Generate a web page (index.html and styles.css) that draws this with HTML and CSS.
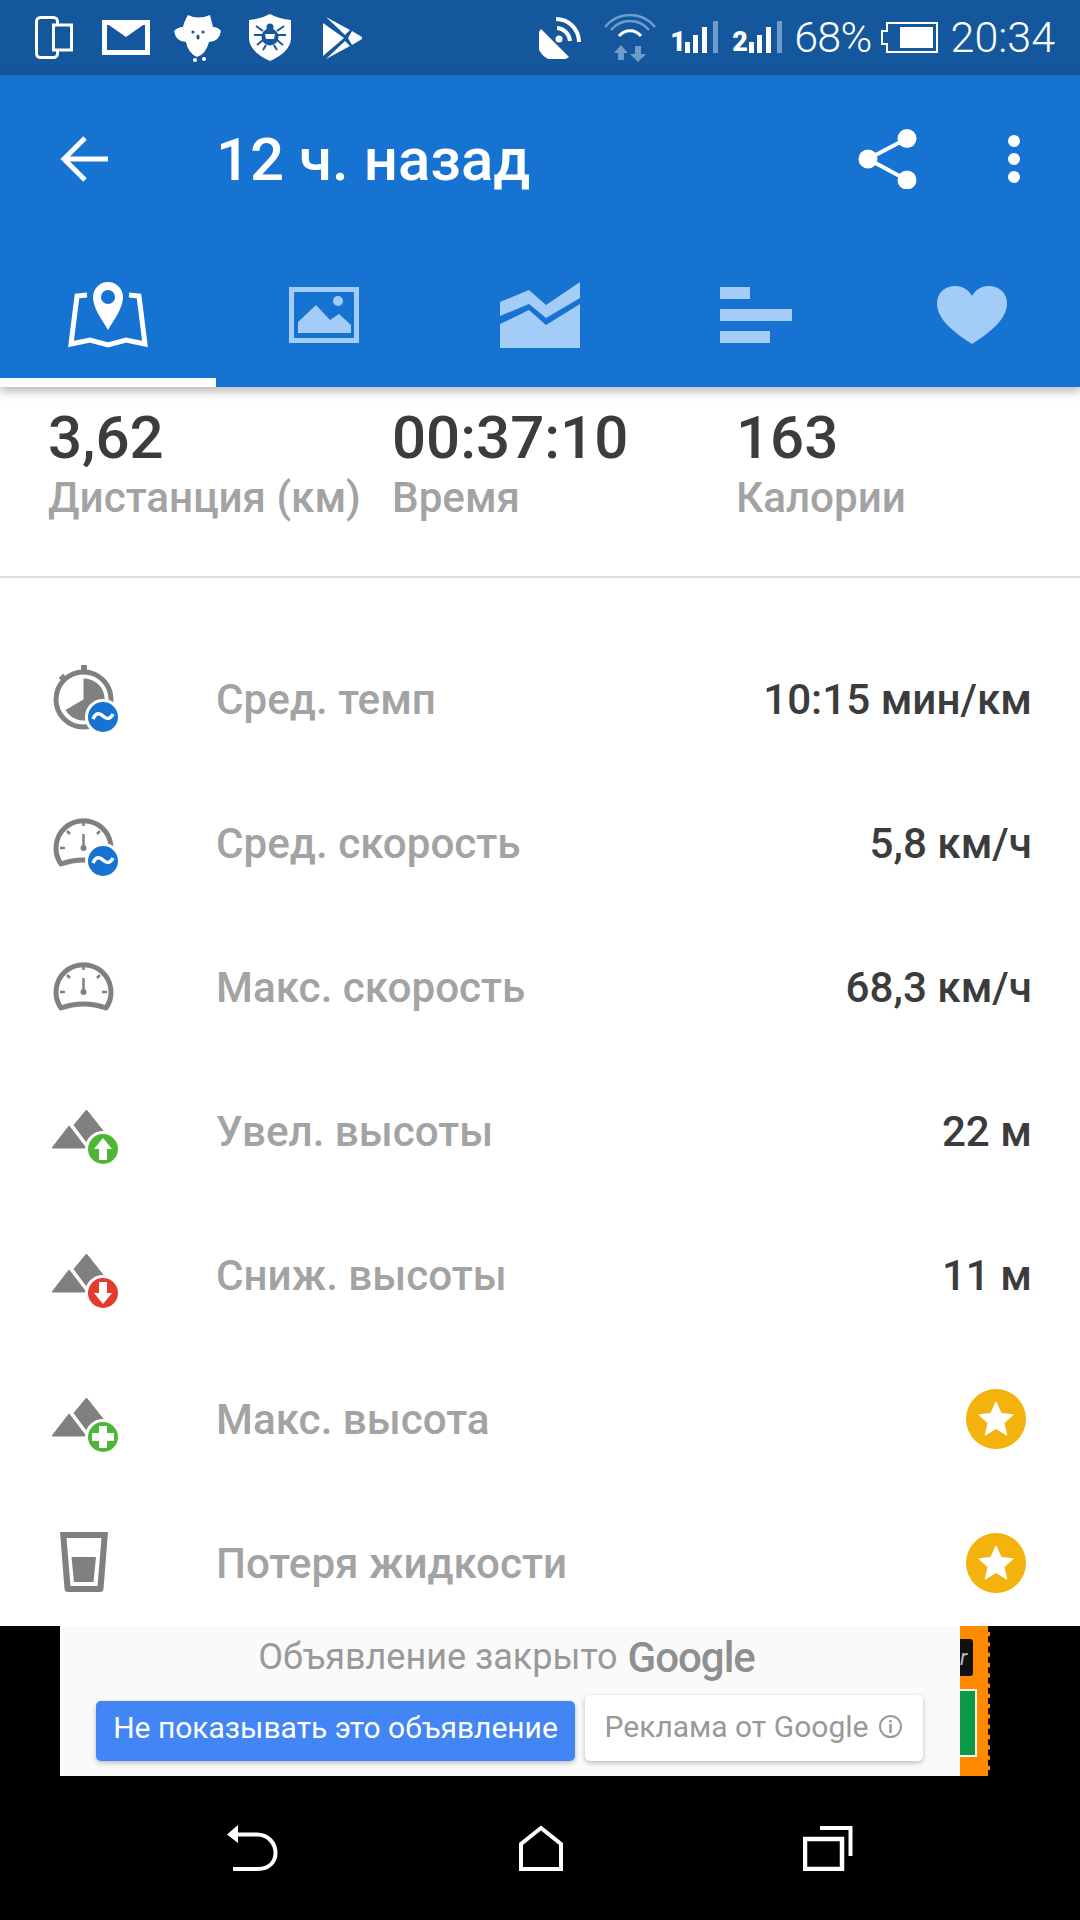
FILE: index.html
```html
<!DOCTYPE html>
<html lang="ru">
<head>
    <meta charset="UTF-8">
    <title>12 ч. назад</title>
    <link rel="stylesheet" href="styles.css">
</head>
<body>

<!-- Status bar -->
<div class="status-bar">
    <div class="status-left">
        <svg width="38" height="43" viewBox="0 0 38 43">
            <rect x="1.5" y="1.5" width="21" height="40" rx="4" fill="none" stroke="#fff" stroke-width="3"/>
            <rect x="18.5" y="9" width="18" height="25" fill="#14579c" stroke="#fff" stroke-width="3"/>
        </svg>
        <svg class="ic-mail" width="48" height="35" viewBox="0 0 48 35">
            <rect x="2.5" y="2.5" width="43" height="30" fill="none" stroke="#fff" stroke-width="5"/>
            <polygon points="4,3 44,3 24,17" fill="#fff"/>
        </svg>
        <svg class="ic-owl" width="47" height="48" viewBox="0 0 47 48">
            <path d="M14 1 Q24 6 36 1 Q38 9 39 13 Q44 13 47 17 Q45 28 35 28 Q32 40 23 43 Q14 39 12 28 Q2 28 0 17 Q4 13 9 13 Q10 8 14 1 Z" fill="#fff"/>
            <circle cx="19" cy="18" r="1.6" fill="#14579c"/>
            <circle cx="29" cy="18" r="1.6" fill="#14579c"/>
            <ellipse cx="24" cy="23" rx="1.6" ry="2.6" fill="#14579c"/>
            <circle cx="21" cy="46" r="2" fill="#fff"/>
            <circle cx="30" cy="45" r="2" fill="#fff"/>
        </svg>
        <svg class="ic-shield" width="42" height="47" viewBox="0 0 42 47">
            <path d="M21 0 Q30 5 42 6 V25 Q41 38 21 47 Q1 38 0 25 V6 Q12 5 21 0 Z" fill="#fff"/>
            <g fill="none" stroke="#14579c" stroke-width="2">
                <path d="M7 12 L14 17 M35 12 L28 17 M5 21 H13 M37 21 H29 M8 31 L14 26 M34 31 L28 26 M14 36 L17 31 M28 36 L25 31"/>
            </g>
            <circle cx="21" cy="23" r="8.5" fill="#14579c"/>
            <circle cx="21" cy="13" r="3.5" fill="#14579c"/>
            <path d="M16 20 H26 L25 25 H17 Z" fill="#fff"/>
        </svg>
        <svg class="ic-play" width="39" height="42" viewBox="0 0 39 42">
            <g fill="#fff">
                <polygon points="0,6 21,21 0,39"/>
                <polygon points="3,0 27,13 22,18"/>
                <polygon points="29,14 39,20 39,22 29,28 25,21"/>
                <polygon points="22,24 27,29 3,42"/>
            </g>
        </svg>
    </div>
    <div class="status-right">
        <svg class="dish" width="42" height="42" viewBox="0 0 42 42">
            <path d="M2 12 L30 40 A20 20 0 0 1 2 12 Z" fill="#fff"/>
            <circle cx="20" cy="22" r="3.5" fill="#fff"/>
            <g fill="none" stroke="#fff" stroke-width="4">
                <path d="M17 2 A23 23 0 0 1 40 25"/>
                <path d="M18 11 A14 14 0 0 1 31 24"/>
            </g>
        </svg>
        <svg class="wifi" width="52" height="49" viewBox="0 0 52 49">
            <g fill="none" stroke="#6f9dcb" stroke-width="2.5">
                <path d="M1 14 C14 -2 38 -2 51 14"/>
                <path d="M7 17 C17 5 35 5 45 17"/>
            </g>
            <path d="M15 23 C21 16 31 16 37 23" fill="none" stroke="#fff" stroke-width="3"/>
            <path d="M17 32 L24 40 H20 V47 H14 V40 H10 Z" fill="#6f9dcb"/>
            <path d="M31 33 H37 V41 H42 L34 49 L26 41 H31 Z" fill="#6f9dcb"/>
        </svg>
        <div class="sim">
            <span class="sim-num sim-num-one">1</span>
            <svg width="33" height="33" viewBox="0 0 33 33">
                <rect x="0" y="21" width="5" height="11" fill="#fff"/>
                <rect x="8" y="14" width="5" height="18" fill="#fff"/>
                <rect x="17" y="6" width="5" height="26" fill="#fff"/>
                <rect x="28" y="0" width="5" height="32" fill="#6f9dcb"/>
            </svg>
        </div>
        <div class="sim">
            <span class="sim-num sim-num-two">2</span>
            <svg width="33" height="33" viewBox="0 0 33 33">
                <rect x="0" y="21" width="5" height="11" fill="#fff"/>
                <rect x="8" y="14" width="5" height="18" fill="#fff"/>
                <rect x="17" y="6" width="5" height="26" fill="#fff"/>
                <rect x="28" y="0" width="5" height="32" fill="#6f9dcb"/>
            </svg>
        </div>
        <span class="status-text percent">68%</span>
        <svg class="battery" width="57" height="31" viewBox="0 0 57 31">
            <path d="M6 1 H56 V30 H6 V22 H1 V9 H6 Z" fill="none" stroke="#fff" stroke-width="2"/>
            <rect x="19" y="5" width="33" height="21" fill="#fff"/>
        </svg>
        <span class="status-text clock">20:34</span>
    </div>
</div>

<!-- Blue toolbar with tabs -->
<div class="toolbar">
    <div class="toolbar-top">
        <svg width="48" height="48" viewBox="0 0 48 48">
            <path d="M48 24 H4 M25 3 L4 24 L25 45" fill="none" stroke="#fff" stroke-width="5"/>
        </svg>
        <h1 class="title">12 ч. назад</h1>
        <svg class="share" width="59" height="60" viewBox="0 0 59 60">
            <path d="M49 9.5 L10 30 L49 51" fill="none" stroke="#fff" stroke-width="4"/>
            <circle cx="49" cy="9.5" r="9.5" fill="#fff"/>
            <circle cx="10" cy="30" r="9.5" fill="#fff"/>
            <circle cx="49" cy="51" r="9.5" fill="#fff"/>
        </svg>
        <svg class="dots" width="12" height="48" viewBox="0 0 12 48">
            <circle cx="6" cy="6" r="6" fill="#fff"/>
            <circle cx="6" cy="24" r="6" fill="#fff"/>
            <circle cx="6" cy="42" r="6" fill="#fff"/>
        </svg>
    </div>
    <div class="tabs">
        <div class="tab active">
            <svg width="80" height="66" viewBox="0 0 80 66">
                <path d="M19 13 L9 14 L3 62 L22 58 L40 63 L58 58 L77 62 L71 14 L61 13" fill="none" stroke="#fff" stroke-width="5"/>
                <path d="M40 48 C33 36 25 26 25 15 A15 15 0 0 1 55 15 C55 26 47 36 40 48 Z" fill="#fff"/>
                <circle cx="40" cy="15" r="7" fill="#1673d1"/>
            </svg>
        </div>
        <div class="tab">
            <svg width="70" height="56" viewBox="0 0 70 56" fill="#a3ccf6">
                <rect x="2.5" y="2.5" width="65" height="51" fill="none" stroke="#a3ccf6" stroke-width="5"/>
                <polygon points="9,46 9,35 27,18 41,33 50,27 62,38 62,46"/>
                <circle cx="49" cy="14" r="5"/>
            </svg>
        </div>
        <div class="tab">
            <svg width="80" height="66" viewBox="0 0 80 66" fill="#a3ccf6">
                <polygon points="0,20 29,8 46,23 80,0 80,16 46,36 29,22 0,34"/>
                <polygon points="0,42 29,28 46,43 80,22 80,66 0,66"/>
            </svg>
        </div>
        <div class="tab">
            <svg width="72" height="56" viewBox="0 0 72 56" fill="#a3ccf6">
                <rect x="0" y="0" width="30" height="12"/>
                <rect x="0" y="22" width="72" height="12"/>
                <rect x="0" y="44" width="50" height="12"/>
            </svg>
        </div>
        <div class="tab">
            <svg width="70" height="58" viewBox="0 0 70 58">
                <path d="M35 58 C10 42 0 30 0 17 C0 7 8 0 18 0 C25 0 31 3 35 10 C39 3 45 0 52 0 C62 0 70 7 70 17 C70 30 60 42 35 58 Z" fill="#a3ccf6"/>
            </svg>
        </div>
    </div>
</div>

<div class="content">
    <!-- Main figures -->
    <div class="stats">
        <div class="stat">
            <div class="stat-value">3,62</div>
            <div class="stat-label">Дистанция (км)</div>
        </div>
        <div class="stat">
            <div class="stat-value">00:37:10</div>
            <div class="stat-label">Время</div>
        </div>
        <div class="stat">
            <div class="stat-value">163</div>
            <div class="stat-label">Калории</div>
        </div>
    </div>

    <!-- Detail rows -->
    <div class="rows">
        <div class="row">
            <svg class="row-icon" width="70" height="80" viewBox="0 0 70 80">
                <circle cx="35.5" cy="39.5" r="27.5" fill="none" stroke="#808080" stroke-width="5"/>
                <rect x="33" y="5" width="6" height="6" fill="#808080"/>
                <rect x="12" y="15" width="6" height="6" fill="#808080" transform="rotate(-45 15 18)"/>
                <path d="M35.5 39.5 V18.5 A21 21 0 1 1 17.5 50 Z" fill="#808080"/>
                <circle cx="55" cy="57" r="18" fill="#fff"/>
                <circle cx="55" cy="57" r="15" fill="#1673d1"/>
                <path d="M45 59 C48 52 52 53 55 56 C58 59 62 60 65 54" fill="none" stroke="#fff" stroke-width="3.5"/>
            </svg>
            <span class="row-label">Сред. темп</span>
            <span class="row-value">10:15 мин/км</span>
        </div>
        <div class="row">
            <svg class="row-icon" width="70" height="80" viewBox="0 0 70 80">
                <path d="M13 60 A27.5 27.5 0 1 1 58 60 Q35.5 52 13 60 Z" fill="none" stroke="#808080" stroke-width="5" stroke-linejoin="round"/>
                <path d="M35.5 17 V22 M12 44 H17 M59 44 H54 M19 27 L22 30 M52 27 L49 30 M35.5 30 V44" fill="none" stroke="#808080" stroke-width="2.5"/>
                <circle cx="35.5" cy="44" r="3" fill="#808080"/>
                <circle cx="55" cy="57" r="18" fill="#fff"/>
                <circle cx="55" cy="57" r="15" fill="#1673d1"/>
                <path d="M45 59 C48 52 52 53 55 56 C58 59 62 60 65 54" fill="none" stroke="#fff" stroke-width="3.5"/>
            </svg>
            <span class="row-label">Сред. скорость</span>
            <span class="row-value">5,8 км/ч</span>
        </div>
        <div class="row">
            <svg class="row-icon" width="70" height="80" viewBox="0 0 70 80">
                <path d="M13 60 A27.5 27.5 0 1 1 58 60 Q35.5 52 13 60 Z" fill="none" stroke="#808080" stroke-width="5" stroke-linejoin="round"/>
                <path d="M35.5 17 V22 M12 44 H17 M59 44 H54 M19 27 L22 30 M52 27 L49 30 M35.5 30 V44" fill="none" stroke="#808080" stroke-width="2.5"/>
                <circle cx="35.5" cy="44" r="3" fill="#808080"/>
            </svg>
            <span class="row-label">Макс. скорость</span>
            <span class="row-value">68,3 км/ч</span>
        </div>
        <div class="row">
            <svg class="row-icon" width="70" height="80" viewBox="0 0 70 80">
                <polygon points="21,34 4,56 38,56" fill="#808080" stroke="#808080" stroke-linejoin="round"/>
                <polygon points="26,33 38.5,18 56,40 40,52" fill="#808080" stroke="#808080" stroke-linejoin="round"/>
                <circle cx="55" cy="57" r="18" fill="#fff"/>
                <circle cx="55" cy="57" r="15" fill="#4fb534"/>
                <polygon points="55,46 64,57 59,57 59,68 51,68 51,57 46,57" fill="#fff"/>
            </svg>
            <span class="row-label">Увел. высоты</span>
            <span class="row-value">22 м</span>
        </div>
        <div class="row">
            <svg class="row-icon" width="70" height="80" viewBox="0 0 70 80">
                <polygon points="21,34 4,56 38,56" fill="#808080" stroke="#808080" stroke-linejoin="round"/>
                <polygon points="26,33 38.5,18 56,40 40,52" fill="#808080" stroke="#808080" stroke-linejoin="round"/>
                <circle cx="55" cy="57" r="18" fill="#fff"/>
                <circle cx="55" cy="57" r="15" fill="#e53a2f"/>
                <polygon points="55,68 64,57 59,57 59,46 51,46 51,57 46,57" fill="#fff"/>
            </svg>
            <span class="row-label">Сниж. высоты</span>
            <span class="row-value">11 м</span>
        </div>
        <div class="row">
            <svg class="row-icon" width="70" height="80" viewBox="0 0 70 80">
                <polygon points="21,34 4,56 38,56" fill="#808080" stroke="#808080" stroke-linejoin="round"/>
                <polygon points="26,33 38.5,18 56,40 40,52" fill="#808080" stroke="#808080" stroke-linejoin="round"/>
                <circle cx="55" cy="57" r="18" fill="#fff"/>
                <circle cx="55" cy="57" r="15" fill="#4fb534"/>
                <polygon points="51,46 59,46 59,53 66,53 66,61 59,61 59,68 51,68 51,61 44,61 44,53 51,53" fill="#fff"/>
            </svg>
            <span class="row-label">Макс. высота</span>
            <svg class="row-star" width="60" height="60" viewBox="0 0 60 60">
                <circle cx="30" cy="30" r="30" fill="#f4b30c"/>
                <polygon points="30,12 35.5,24 48,25.5 38.5,34 41.5,47 30,40 18.5,47 21.5,34 12,25.5 24.5,24" fill="#fff"/>
            </svg>
        </div>
        <div class="row">
            <svg class="row-icon" width="70" height="80" viewBox="0 0 70 80">
                <path d="M12 8 H60 L55.5 65 Q55 68 52 68 H20 Q17 68 16.5 65 Z" fill="#808080"/>
                <polygon points="18.5,14 53.5,14 49.5,62 22.5,62" fill="#fff"/>
                <polygon points="23.5,33 48,33 45.5,58 26,58" fill="#808080"/>
            </svg>
            <span class="row-label">Потеря жидкости</span>
            <svg class="row-star" width="60" height="60" viewBox="0 0 60 60">
                <circle cx="30" cy="30" r="30" fill="#f4b30c"/>
                <polygon points="30,12 35.5,24 48,25.5 38.5,34 41.5,47 30,40 18.5,47 21.5,34 12,25.5 24.5,24" fill="#fff"/>
            </svg>
        </div>
    </div>
</div>

<!-- Closed ad -->
<div class="ad-strip">
    <div class="ad">
        <div class="ad-title">Объявление закрыто <span class="ad-google">Google</span></div>
        <div class="ad-buttons">
            <div class="ad-btn-blue">Не показывать это объявление</div>
            <div class="ad-btn-white">
                Реклама от Google
                <svg width="25" height="25" viewBox="0 0 25 25">
                    <circle cx="12.5" cy="12.5" r="10.5" fill="none" stroke="#999" stroke-width="2"/>
                    <path d="M12.5 10 V19 M12.5 6 V8.5" fill="none" stroke="#999" stroke-width="2.5"/>
                </svg>
            </div>
        </div>
    </div>
    <div class="ad-behind">
        <div class="ad-behind-dark">r</div>
        <div class="ad-behind-green"></div>
    </div>
</div>

<!-- Navigation bar -->
<div class="nav-bar">
    <svg width="52" height="46" viewBox="0 0 52 46">
        <path d="M11 0 L0 9.5 L11 18 Z" fill="#fff"/>
        <path d="M9 9.5 H30 C41 9.5 48.5 18 48.5 28 C48.5 37 42 44 31 44 H6" fill="none" stroke="#fff" stroke-width="4"/>
    </svg>
    <svg width="44" height="46" viewBox="0 0 44 46">
        <polygon points="22,3 42,19 42,44 2,44 2,19" fill="none" stroke="#fff" stroke-width="4"/>
    </svg>
    <svg width="50" height="46" viewBox="0 0 50 46">
        <rect x="2" y="14" width="37" height="30" fill="none" stroke="#fff" stroke-width="4.5"/>
        <path d="M17 3 H47.5 V31" fill="none" stroke="#fff" stroke-width="4"/>
    </svg>
</div>

</body>
</html>
```

FILE: styles.css
```css
/* Page */
body {
    margin: 0;
    width: 1080px;
    height: 1920px;
    display: flex;
    flex-direction: column;
    overflow: hidden;
    background-color: #fff;
    font-family: Roboto, sans-serif;
}

/* Status bar */
.status-bar {
    height: 75px;
    flex: none;
    display: flex;
    justify-content: space-between;
    align-items: center;
    padding: 0 25px 0 35px;
    box-sizing: border-box;
    background-color: #14579c;
    color: #fff;
}

.status-left {
    display: flex;
    align-items: center;
}

.ic-mail {
    margin-left: 29px;
}

.ic-owl {
    margin-left: 24px;
}

.ic-shield {
    margin-left: 28px;
}

.ic-play {
    margin-left: 32px;
}

.status-right {
    display: flex;
    align-items: center;
    gap: 15px;
}

.dish {
    margin-right: 8px;
}

.wifi {
    margin-right: 3px;
}

.sim {
    display: flex;
    align-items: flex-end;
    height: 33px;
}

.sim-num {
    font-size: 27px;
    font-weight: 900;
    line-height: 23px;
}

.sim-num-one {
    width: 15px;
    margin-left: -4px;
}

.sim-num-two {
    width: 17px;
    margin-left: -1px;
}

.status-text {
    font-size: 43px;
    font-weight: 300;
    line-height: 75px;
}

.percent {
    margin-left: -3px;
    letter-spacing: -0.7px;
}

.battery {
    margin: 0 -2px 0 -6px;
}

/* Toolbar */
.toolbar {
    flex: none;
    height: 312px;
    position: relative;
    z-index: 1;
    background-color: #1673d1;
    box-shadow: 0 4px 10px rgba(0, 0, 0, 0.3);
}

.toolbar-top {
    height: 168px;
    display: flex;
    align-items: center;
    padding: 0 60px;
    margin-bottom: 27px;
}

.title {
    margin: 0 0 0 108px;
    font-size: 60px;
    font-weight: 500;
    color: #fff;
}

.share {
    margin-left: auto;
}

.dots {
    margin-left: 91px;
}

.tabs {
    display: flex;
}

.tab {
    width: 216px;
    height: 117px;
    box-sizing: border-box;
    display: flex;
    justify-content: center;
    align-items: center;
    padding-bottom: 18px;
    border-bottom: 9px solid transparent;
}

.tab.active {
    border-bottom-color: #fff;
}

/* Content */
.content {
    flex: 1;
    overflow: hidden;
}

.stats {
    height: 189px;
    display: grid;
    grid-template-columns: 344px 344px 1fr;
    padding-left: 48px;
    border-bottom: 2px solid #dcdcdc;
}

.stat-value {
    margin-top: 15px;
    font-size: 60px;
    line-height: 72px;
    font-weight: 500;
    color: #3c3c3c;
}

.stat-label {
    margin-top: 1px;
    font-size: 42.2px;
    line-height: 46px;
    font-weight: 500;
    color: #a3a3a3;
}

.rows {
    padding-top: 50px;
}

.row {
    height: 144px;
    display: flex;
    align-items: center;
    padding: 0 48px;
}

.row-icon {
    flex: none;
    margin-right: 98px;
}

.row-label {
    padding-bottom: 2px;
    font-size: 42.2px;
    font-weight: 500;
    color: #a3a3a3;
}

.row-value {
    margin-left: auto;
    padding-bottom: 2px;
    font-size: 42.2px;
    font-weight: 500;
    color: #3c3c3c;
}

.row-star {
    margin: 0 6px 2px auto;
}

/* Ad */
.ad-strip {
    flex: none;
    height: 150px;
    display: flex;
    padding-left: 60px;
    background-color: #000;
}

.ad {
    width: 900px;
    box-sizing: border-box;
    padding: 0 36px;
    background-color: #fafafa;
}

.ad-title {
    height: 69px;
    box-sizing: border-box;
    padding: 0 7px 7px 0;
    display: flex;
    justify-content: center;
    align-items: center;
    gap: 10px;
    font-size: 36px;
    color: #999;
}

.ad-google {
    font-size: 42px;
    font-weight: 500;
    color: #8f8f8f;
    letter-spacing: -1px;
}

.ad-buttons {
    display: flex;
    align-items: flex-end;
    gap: 10px;
}

.ad-btn-blue {
    width: 479px;
    height: 60px;
    box-sizing: border-box;
    padding-bottom: 8px;
    display: flex;
    justify-content: center;
    align-items: center;
    border-radius: 5px;
    background-color: #4285f4;
    box-shadow: 0 2px 5px rgba(0, 0, 0, 0.25);
    font-size: 30px;
    color: #fff;
}

.ad-btn-white {
    width: 338px;
    height: 66px;
    box-sizing: border-box;
    padding-bottom: 4px;
    display: flex;
    justify-content: center;
    align-items: center;
    gap: 10px;
    border-radius: 5px;
    background-color: #fff;
    box-shadow: 0 2px 5px rgba(0, 0, 0, 0.25);
    font-size: 30px;
    color: #999;
}

.ad-behind {
    width: 30px;
    height: 150px;
    box-sizing: border-box;
    padding-top: 13px;
    background-color: #ff8a00;
    border-right: 2px dashed #000;
}

.ad-behind-dark {
    width: 13px;
    height: 37px;
    box-sizing: border-box;
    padding-top: 8px;
    overflow: hidden;
    border-radius: 0 3px 3px 0;
    background-color: #111;
    font-size: 22px;
    font-style: italic;
    line-height: 22px;
    color: #bbb;
}

.ad-behind-green {
    width: 17px;
    height: 68px;
    box-sizing: border-box;
    margin-top: 13px;
    background-color: #0a9a48;
    border: 2px solid #f4f4e8;
    border-left: 0;
}

/* Navigation bar */
.nav-bar {
    flex: none;
    height: 144px;
    box-sizing: border-box;
    display: flex;
    justify-content: space-between;
    align-items: flex-start;
    padding: 49px 227px 0;
    background-color: #000;
}
```
